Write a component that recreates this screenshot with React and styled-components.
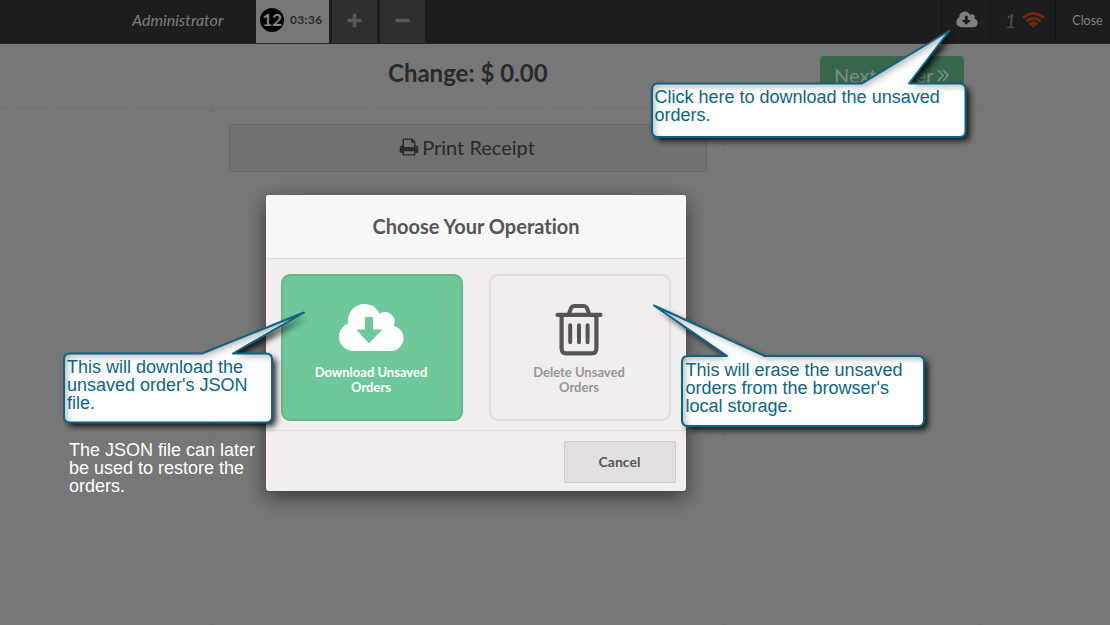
import React from "react";
import styled, { createGlobalStyle } from "styled-components";

const Global = createGlobalStyle`
  *, *::before, *::after { box-sizing: border-box; }
  body { margin: 0; overflow: hidden; font-family: Lato, sans-serif; font-variant-ligatures: none; }
`;

const Screen = styled.div`
  position: relative;
  width: 1110px;
  height: 625px;
  overflow: hidden;
  display: flex;
  flex-direction: column;
  background: #777777;
  color: #2a2a2a;
`;

const TopBar = styled.header`
  flex: 0 0 44px;
  display: flex;
  background: #1d1d1d;
  border-bottom: 1px solid #262626;
`;

const UserName = styled.div`
  width: 256px;
  padding-left: 132px;
  font-size: 16px;
  line-height: 40px;
  font-style: italic;
  color: #7d7d7d;
`;

const OrderTab = styled.div`
  width: 73px;
  margin-right: 3px;
  display: flex;
  align-items: center;
  padding: 0 0 3px 4px;
  gap: 6px;
  background: #777777;
`;

const OrderNumber = styled.span`
  width: 24px;
  height: 24px;
  border-radius: 50%;
  background: #000;
  color: #868686;
  font-size: 17.5px;
  line-height: 24px;
  font-weight: 700;
  letter-spacing: -0.5px;
  text-align: center;
`;

const OrderTime = styled.span`
  font-size: 12px;
  font-weight: 700;
  line-height: 14px;
  letter-spacing: 0.3px;
  color: #2a2a2a;
`;

const TabButton = styled.div`
  width: 45px;
  margin-right: 3px;
  display: flex;
  align-items: center;
  justify-content: center;
  padding-bottom: 2px;
  background: #2f2f2f;
`;

const Spacer = styled.div`
  flex: 1;
`;

const StatusCell = styled.div`
  width: ${(p) => p.$width}px;
  display: flex;
  align-items: center;
  justify-content: center;
  padding: 0 0 3px ${(p) => p.$inset || 0}px;
  gap: 6px;
  border-left: 1px solid #141414;
  color: #7f7f7f;
  font-size: 12.5px;
`;

const PendingCount = styled.span`
  font-size: 20px;
  font-style: italic;
  line-height: 24px;
  color: #4d4d4d;
`;

const Main = styled.main`
  flex: 1;
  width: 981px;
  display: flex;
  flex-direction: column;
  border-right: 1px dashed #6c6c6c;
`;

const ChangeHeader = styled.div`
  flex: 0 0 65px;
  display: flex;
  justify-content: space-between;
  align-items: flex-start;
  padding: 12px 16px 0 388px;
  border-bottom: 1px dashed #6c6c6c;
`;

const ChangeText = styled.h1`
  margin: 0;
  font-size: 24px;
  line-height: 33px;
  font-weight: 700;
  white-space: nowrap;
`;

const NextOrder = styled.div`
  width: 144px;
  height: 40px;
  padding: 0 0 2px 13px;
  display: flex;
  align-items: center;
  gap: 4px;
  border: 1px solid #356b4c;
  border-radius: 3px;
  background: #38664c;
  color: #7c8a82;
  font-size: 20px;
  white-space: nowrap;
`;

const Columns = styled.div`
  flex: 1;
  display: flex;
`;

const ReceiptColumn = styled.section`
  width: 512px;
  margin-left: 212px;
  padding: 15px 16px 0;
  border-left: 1px dashed #6c6c6c;
  border-right: 1px dashed #6c6c6c;
`;

const PrintButton = styled.div`
  height: 48px;
  display: flex;
  align-items: center;
  justify-content: center;
  gap: 3px;
  padding: 0 2px 2px 0;
  border: 1px solid #666;
  border-radius: 3px;
  background: #717171;
  font-size: 20px;
`;

const ReceiptPaper = styled.div`
  height: 30px;
  margin: 21px 74px 0;
  border-top: 1px solid #6d6d6d;
`;

const Dialog = styled.div`
  position: absolute;
  left: 266px;
  top: 195px;
  width: 420px;
  height: 296px;
  display: flex;
  flex-direction: column;
  border-radius: 3px;
  background: #f0eeee;
  box-shadow: 0 6px 20px rgba(0, 0, 0, 0.55);
`;

const DialogTitle = styled.h2`
  margin: 0;
  flex: 0 0 64px;
  border-bottom: 1px solid #dddcdc;
  border-radius: 3px 3px 0 0;
  background: #f7f7f7;
  color: #555;
  font-size: 20px;
  line-height: 63px;
  font-weight: 700;
  text-align: center;
`;

const Choices = styled.div`
  flex: 1;
  display: flex;
  gap: 26px;
  padding: 15px 15px 0;
`;

const Choice = styled.div`
  width: 182px;
  height: 147px;
  display: flex;
  flex-direction: column;
  align-items: center;
  padding: 27px 2px 0 0;
  border: 2px solid ${(p) => (p.$primary ? "#67b58d" : "#dfdddd")};
  border-radius: 9px;
  background: ${(p) => (p.$primary ? "#6ec89b" : "#f0eeee")};
  color: ${(p) => (p.$primary ? "#fff" : "#979797")};
`;

const ChoiceLabel = styled.div`
  width: 130px;
  margin-top: 9px;
  font-size: 13px;
  line-height: 15px;
  font-weight: 700;
  text-align: center;
`;

const DialogFooter = styled.div`
  flex: 0 0 61px;
  display: flex;
  justify-content: flex-end;
  padding: 10px 10px 0;
  border-top: 1px solid #dddcdc;
`;

const CancelButton = styled.div`
  width: 112px;
  height: 42px;
  padding-right: 1px;
  border: 1px solid #cecccc;
  border-radius: 2px;
  background: #e2e0e1;
  color: #555;
  font-size: 14px;
  line-height: 40px;
  font-weight: 700;
  text-align: center;
`;

const Overlay = styled.svg`
  position: absolute;
  inset: 0;
  pointer-events: none;
`;

const Note = styled.p`
  position: absolute;
  left: ${(p) => p.$x}px;
  top: ${(p) => p.$y}px;
  margin: 0;
  color: ${(p) => p.$color || "#0c6584"};
  font-family: "Liberation Sans", Arial, sans-serif;
  font-size: 18px;
  line-height: 18px;
  white-space: pre;
`;

const bubbles = [
  "M658 83.500H862L949.500 30.500L909 83.500H959.500Q965.500 83.500 965.500 89.500V131Q965.500 137 959.500 137H658Q652 137 652 131V89.500Q652 83.500 658 83.500Z",
  "M70 353.500H202L304 312.500L233 353.500H266Q272 353.500 272 359.500V416.500Q272 422.500 266 422.500H70Q64 422.500 64 416.500V359.500Q64 353.500 70 353.500Z",
  "M688 356H727L654 305.500L764.500 356H918Q924 356 924 362V420Q924 426 918 426H688Q682 426 682 420V362Q682 356 688 356Z",
];

function Bubbles() {
  return (
    <Overlay width="1110" height="625" viewBox="0 0 1110 625">
      <defs>
        <filter id="drop" filterUnits="userSpaceOnUse" x="0" y="0" width="1110" height="625">
          <feGaussianBlur stdDeviation="3" />
        </filter>
        <filter id="soft" filterUnits="userSpaceOnUse" x="0" y="0" width="1110" height="625">
          <feGaussianBlur stdDeviation="3.500" />
        </filter>
        {bubbles.map((d, i) => (
          <clipPath id={"bubble" + i} key={i}>
            <path d={d} />
          </clipPath>
        ))}
      </defs>
      {bubbles.map((d, i) => (
        <g key={i}>
          <path d={d} transform="translate(4 4)" fill="#000" opacity="0.85" filter="url(#drop)" />
          <path d={d} fill="#fff" />
          <g clipPath={`url(#bubble${i})`}>
            <path
              d={"M0 0H1110V625H0Z" + d}
              fillRule="evenodd"
              transform="translate(3 3)"
              fill="#8f979f"
              opacity="0.7"
              filter="url(#soft)"
            />
          </g>
          <path d={d} fill="none" stroke="#0d6482" strokeWidth="2" strokeLinejoin="round" />
        </g>
      ))}
    </Overlay>
  );
}

const SmallCloud = () => (
  <svg width="22" height="20" viewBox="0 0 1920 1792">
    <path
      fill="#807f7c"
      d="M1280 928q0-14-9-23t-23-9h-224v-352q0-13-9.500-22.500t-22.500-9.500h-192q-13 0-22.500 9.500t-9.500 22.500v352h-224q-13 0-22.500 9.500t-9.500 22.500q0 14 9 23l352 352q9 9 23 9t23-9l351-351q10-12 10-24zm640 224q0 159-112.500 271.500t-271.500 112.500h-1088q-185 0-316.500-131.500t-131.500-316.500q0-130 70-240t188-165q-2-30-2-43 0-212 150-362t362-150q156 0 285.500 87t188.500 231q71-62 166-62 106 0 181 75t75 181q0 76-41 138 130 31 213.500 135.500t83.500 238.500z"
    />
  </svg>
);

const Wifi = () => (
  <svg width="23" height="16" viewBox="0 0 23 16" fill="none" stroke="#6e2a10" strokeWidth="3.100">
    <path d="M1 5.700Q11.500 -2.700 22 5.700" />
    <path d="M4.500 9.300Q11.500 3.500 18.500 9.300" />
    <path d="M7.700 12.700Q11.500 9.500 15.300 12.700" />
    <path d="M9.300 13.500Q11.500 12 13.700 13.500L11.500 16Z" fill="#6e2a10" stroke="none" />
  </svg>
);

const Printer = () => (
  <svg width="20" height="20" viewBox="0 0 1792 1792">
    <path
      fill="#2a2a2a"
      d="M448 1536h896v-256h-896v256zm0-640h896v-384h-160q-40 0-68-28t-28-68v-160h-640v640zm1152 64q0-26-19-45t-45-19-45 19-19 45 19 45 45 19 45-19 19-45zm128 0v416q0 13-9.500 22.500t-22.500 9.500h-224v160q0 40-28 68t-68 28h-960q-40 0-68-28t-28-68v-160h-224q-13 0-22.500-9.500t-9.500-22.500v-416q0-79 56.500-135.500t135.500-56.500h64v-544q0-40 28-68t68-28h672q40 0 88 20t76 48l152 152q28 28 48 76t20 88v256h64q79 0 135.500 56.500t56.500 135.500z"
    />
  </svg>
);

const BigCloud = () => (
  <svg width="66" height="53" viewBox="0 0 66 53">
    <path
      fill="#fff"
      d="M16 48C7 48 1 41.500 1 34C1 28 4.500 23 10 20.500C9 10 16 1 26.500 1C33.500 1 39 4.500 41.500 11C44 9 47 8.500 50 9.500C56 11.500 58.500 17.500 55.500 23C61.500 24 65.500 29 65.500 35C65.500 42.500 60 48 53 48Z"
    />
    <path fill="#6ec89b" d="M27 14H35V26.500H44.500L31 40.200L18 26.500H27Z" />
  </svg>
);

const Trash = () => (
  <svg width="48" height="53" viewBox="0 0 48 53" fill="none" stroke="#555" strokeLinecap="round">
    <path strokeWidth="4.200" d="M2.500 11.900H45.500" />
    <path strokeWidth="4" d="M14 10.500L16 5.300Q17 3 19.500 3H28.500Q31 3 32 5.300L34 10.500" />
    <path strokeWidth="4.200" d="M6.600 12V45.200Q6.600 50.400 11.500 50.400H36.500Q41.400 50.400 41.400 45.200V12" />
    <path strokeWidth="4" d="M15.200 22.300V39.300M24 22.300V39.300M32.600 22.300V39.300" />
  </svg>
);

export default function App() {
  return (
    <Screen>
      <Global />
      <TopBar>
        <UserName>Administrator</UserName>
        <OrderTab>
          <OrderNumber>12</OrderNumber>
          <OrderTime>03:36</OrderTime>
        </OrderTab>
        <TabButton>
          <svg width="15" height="15" viewBox="0 0 15 15" stroke="#595959" strokeWidth="3.600" strokeLinecap="round">
            <path d="M2 7.500H13M7.500 2V13" />
          </svg>
        </TabButton>
        <TabButton>
          <svg width="15" height="15" viewBox="0 0 15 15" stroke="#595959" strokeWidth="3.600" strokeLinecap="round">
            <path d="M2 7.500H13" />
          </svg>
        </TabButton>
        <Spacer />
        <StatusCell $width={49} $inset={1}>
          <SmallCloud />
        </StatusCell>
        <StatusCell $width={65} $inset={4}>
          <PendingCount>1</PendingCount>
          <Wifi />
        </StatusCell>
        <StatusCell $width={55} $inset={9}>Close</StatusCell>
      </TopBar>
      <Main>
        <ChangeHeader>
          <ChangeText>Change: $ 0.00</ChangeText>
          <NextOrder>
            Next Order
            <svg width="12" height="13" viewBox="0 0 12 13" fill="none" stroke="#7c8a82" strokeWidth="1.800">
              <path d="M1 1L6 6.500L1 12M6 1L11 6.500L6 12" />
            </svg>
          </NextOrder>
        </ChangeHeader>
        <Columns>
          <ReceiptColumn>
            <PrintButton>
              <Printer />
              Print Receipt
            </PrintButton>
            <ReceiptPaper />
          </ReceiptColumn>
        </Columns>
      </Main>
      <Dialog>
        <DialogTitle>Choose Your Operation</DialogTitle>
        <Choices>
          <Choice $primary>
            <BigCloud />
            <ChoiceLabel>Download Unsaved Orders</ChoiceLabel>
          </Choice>
          <Choice>
            <Trash />
            <ChoiceLabel>Delete Unsaved Orders</ChoiceLabel>
          </Choice>
        </Choices>
        <DialogFooter>
          <CancelButton>Cancel</CancelButton>
        </DialogFooter>
      </Dialog>
      <Bubbles />
      <Note $x={654.5} $y={88}>{"Click here to download the unsaved\norders."}</Note>
      <Note $x={67} $y={358}>{"This will download the\nunsaved order's JSON\nfile."}</Note>
      <Note $x={685.5} $y={361}>{"This will erase the unsaved\norders from the browser's\nlocal storage."}</Note>
      <Note $x={69} $y={441} $color="#fff">{"The JSON file can later\nbe used to restore the\norders."}</Note>
    </Screen>
  );
}
